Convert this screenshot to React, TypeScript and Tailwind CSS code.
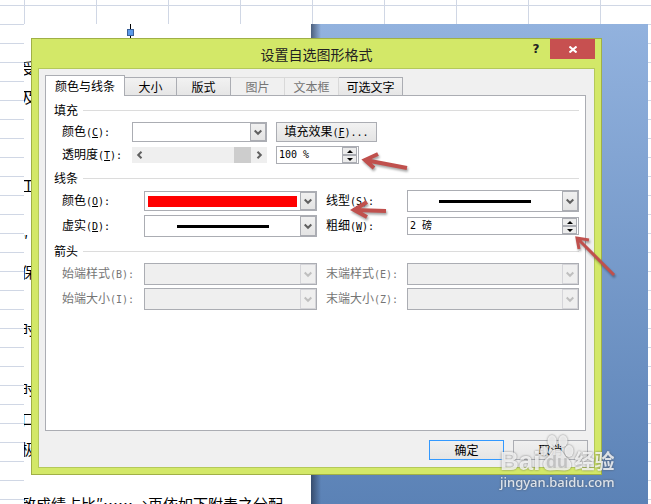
import React from 'react';

const Mono: React.FC<{ children: React.ReactNode }> = ({ children }) => (
  <span className="font-['DejaVu_Sans_Mono','Noto_Sans_CJK_SC',monospace] text-[10px]">{children}</span>
);

interface CaptionProps {
  text: string;
  hotkey: string;
  htmlFor: string;
  disabled?: boolean;
}

const Caption: React.FC<CaptionProps> = ({ text, hotkey, htmlFor, disabled }) => (
  <label htmlFor={htmlFor} className={`whitespace-nowrap ${disabled ? 'text-[#757575]' : ''}`}>
    {text}
    <Mono>
      (<span className={disabled ? '' : 'underline'}>{hotkey}</span>):
    </Mono>
  </label>
);

const Chevron: React.FC<{ d: string }> = ({ d }) => (
  <svg viewBox="0 0 8 8" className="h-2 w-2" fill="none" stroke="currentColor" strokeWidth="2">
    <path d={d} />
  </svg>
);

interface ComboProps {
  id: string;
  disabled?: boolean;
  small?: boolean;
  children?: React.ReactNode;
}

const Combo: React.FC<ComboProps> = ({ id, disabled, small, children }) => (
  <div className={`relative w-full ${small ? 'h-5' : 'h-[22px]'}`}>
    <select
      id={id}
      disabled={disabled}
      className="block h-full w-full appearance-none border border-[#abadb3] bg-white outline-none disabled:bg-[#efefef] disabled:opacity-100"
    />
    <div className="pointer-events-none absolute inset-0 flex p-px">
      <div className="flex flex-1 items-center justify-center">{children}</div>
      <div
        className={`flex w-4 items-center justify-center border ${
          disabled
            ? 'border-[#d5d5d9] bg-[#efefef] text-[#bfbfbf]'
            : 'border-[#abadb3] bg-gradient-to-b from-[#f0f0f0] to-[#e4e4e4] text-[#606060]'
        }`}
      >
        <Chevron d="M.7 2.5 4 5.8 7.3 2.5" />
      </div>
    </div>
  </div>
);

const Spinner: React.FC<{ id: string; value: string }> = ({ id, value }) => (
  <div className="flex h-[18px] w-full border border-[#abadb3] bg-white">
    <input
      id={id}
      defaultValue={value}
      className="min-w-0 flex-1 pl-[2px] font-['DejaVu_Sans_Mono','Noto_Sans_CJK_SC',monospace] text-[10px] outline-none"
    />
    <div className="mr-px flex w-[15px] flex-col">
      {['M3 0 6 3H0Z', 'M0 0H6L3 3Z'].map((d, i) => (
        <button
          key={d}
          type="button"
          aria-label={i ? 'down' : 'up'}
          className="flex flex-1 items-center justify-center border border-[#abadb3] bg-[#ececec]"
        >
          <svg viewBox="0 0 6 3" className="h-[3px] w-[6px]">
            <path d={d} />
          </svg>
        </button>
      ))}
    </div>
  </div>
);

const Section: React.FC<{ title: string; children: React.ReactNode }> = ({ title, children }) => (
  <section>
    <div className="flex h-4 items-center gap-[5px]">
      <h2>{title}</h2>
      <div className="h-px flex-1 bg-[#dcdcdc]" />
    </div>
    {children}
  </section>
);

const tabs = [
  { name: '大小', width: 'w-[52px]' },
  { name: '版式', width: 'w-[54px]' },
  { name: '图片', width: 'w-[54px]', disabled: true },
  { name: '文本框', width: 'w-[54px]', disabled: true },
  { name: '可选文字', width: 'w-[64px]' },
];

// lines of the document that peek out left of the dialog
const docLines = [
  { text: '受', height: 'h-[29px]' },
  { text: '及', height: 'h-[88px]' },
  { text: '工', height: 'h-[56px]' },
  { text: '″', height: 'h-[31px]' },
  { text: '保', height: 'h-[57px]' },
  { text: '时', height: 'h-[60px]' },
  { text: '时', height: 'h-[30px]' },
  { text: '口', height: 'h-[30px]' },
  { text: '极', height: 'h-[55px]' },
  { text: '致成绩占比″……→再依如下附表之分配', height: 'h-[11px]' },
];

const Arrow: React.FC<{ className: string; d: string; width?: number }> = ({ className, d, width = 4 }) => (
  <svg
    viewBox="0 0 50 50"
    className={`pointer-events-none absolute h-[50px] w-[50px] overflow-visible drop-shadow-[1px_2px_1px_rgba(0,0,0,0.35)] ${className}`}
    fill="none"
    stroke="#c0504d"
    strokeWidth={width}
  >
    <path d={d} />
  </svg>
);

const Watermark: React.FC = () => (
  <div className="pointer-events-none absolute top-[434px] left-[500px] text-white/80 drop-shadow-[0_0_1px_rgba(70,70,70,0.8)]">
    <div className="flex h-[40px] items-end">
      <span className="font-['Liberation_Sans',sans-serif] text-[26px] leading-[26px] font-bold">Bai</span>
      <svg viewBox="0 0 34 40" className="h-[40px] w-[34px]" fill="currentColor">
        <ellipse cx="4" cy="17" rx="4" ry="5" />
        <ellipse cx="12" cy="7" rx="4.5" ry="6" />
        <ellipse cx="23" cy="7" rx="4.5" ry="6" />
        <ellipse cx="29" cy="17" rx="4.5" ry="6" />
        <path d="M17 15c-5 0-6 5-9 8-4 3-6 6-4 10 2 5 8 3 13 3s12 2 14-3c1-4-1-7-5-10-3-4-4-8-9-8Z" />
        <text
          x="17"
          y="34"
          textAnchor="middle"
          fill="#999"
          fillOpacity=".45"
          className="font-['Liberation_Sans',sans-serif] text-[18px] font-bold"
        >
          du
        </text>
      </svg>
      <span className="font-['Noto_Sans_CJK_SC',sans-serif] text-[20px] leading-[26px] font-bold">经验</span>
    </div>
    <div className="font-['Noto_Sans',sans-serif] text-[13px] leading-4 font-medium">jingyan.baidu.com</div>
  </div>
);

const App: React.FC = () => {
  return (
    <div className="relative flex h-screen flex-col overflow-hidden bg-white font-['Noto_Sans_CJK_SC',sans-serif] text-[12px] leading-4 text-black">
      {/* sheet grid */}
      <div className="h-6 shrink-0 bg-[linear-gradient(to_right,#d0d7e5_1px,transparent_1px),linear-gradient(to_bottom,#d0d7e5_1px,transparent_1px)] bg-[size:72px_24px,100%_19px] bg-[position:24px_0,0_5px]" />
      <div className="flex min-h-0 flex-1 bg-[linear-gradient(to_bottom,#d0d7e5_1px,transparent_1px)] bg-[size:100%_19px] pr-[3px] pl-6">
        <div className="w-[287px] overflow-hidden bg-white pt-[33px] text-[15px] leading-[22px] whitespace-nowrap">
          {docLines.map((line, i) => (
            <p key={i} className={`-ml-[3px] ${line.height}`}>
              {line.text}
            </p>
          ))}
        </div>
        <div className="flex-1 bg-[linear-gradient(to_right,rgba(30,40,60,0.6),transparent_10px),linear-gradient(to_bottom,#92b2de,#5b82b6)]" />
      </div>

      {/* shape handle */}
      <div className="absolute top-6 left-[130px] h-4 w-px bg-black" />
      <div className="absolute top-[29px] left-[127px] h-[7px] w-[7px] border border-[#3a6098] bg-[#5b9aea]" />

      {/* dialog */}
      <div className="absolute top-[38px] left-[31px] w-[571px] border border-[#a0b046] bg-[#d3e868] px-[6px] pb-[6px]">
        <div className="relative flex h-[29px] items-center justify-center">
          <h1 className="text-[14px] leading-5 text-[#222]">设置自选图形格式</h1>
          <div className="absolute top-0 right-0 flex">
            <button type="button" className="h-5 w-7 font-['DejaVu_Sans',sans-serif] text-[12px] font-bold text-[#222]">
              ?
            </button>
            <button type="button" aria-label="close" className="flex h-5 w-[45px] items-center justify-center bg-[#c75050]">
              <svg viewBox="0 0 8 7" className="h-[7px] w-[8px]" stroke="white" strokeWidth="2">
                <path d="M.5.5l7 6M7.5.5l-7 6" />
              </svg>
            </button>
          </div>
        </div>

        <div className="border border-[#b4c95a] bg-[#f0f0f0] px-[6px] pt-[6px] pb-[7px]">
          <div className="flex h-5 items-end">
            <button
              type="button"
              className="relative z-10 -mb-px h-[21px] w-[80px] border border-b-0 border-[#abadb3] bg-white"
            >
              颜色与线条
            </button>
            {tabs.map((tab) => (
              <button
                key={tab.name}
                type="button"
                disabled={tab.disabled}
                className={`h-[18px] border border-b-0 border-l-0 border-[#abadb3] bg-gradient-to-b from-[#f2f2f2] to-[#e6e6e6] disabled:border-[#d9d9d9] disabled:bg-none disabled:text-[#757575] ${tab.width}`}
              >
                {tab.name}
              </button>
            ))}
          </div>

          <div className="mr-[2px] flex h-[336px] flex-col gap-[6px] border border-[#abadb3] bg-white pt-[6px] pr-[6px] pl-2">
            <Section title="填充">
              <div className="mt-1 grid grid-cols-[70px_135px] items-center gap-y-1 pl-2">
                <Caption text="颜色" hotkey="C" htmlFor="fill-color" />
                <div className="flex gap-[9px]">
                  <div className="w-[135px] shrink-0">
                    <Combo id="fill-color" small />
                  </div>
                  <button
                    type="button"
                    className="h-5 w-[101px] shrink-0 border border-[#abadb3] bg-gradient-to-b from-[#f2f2f2] to-[#e4e4e4] whitespace-nowrap"
                  >
                    填充效果
                    <Mono>
                      (<span className="underline">F</span>)...
                    </Mono>
                  </button>
                </div>
                <Caption text="透明度" hotkey="T" htmlFor="opacity" />
                <div className="flex items-center gap-[9px]">
                  <div className="flex h-4 w-[135px] shrink-0 items-center bg-[#efefef] px-1 text-[#606060]">
                    <Chevron d="M5.5 .7 2.2 4 5.5 7.3" />
                    <div className="mr-1 ml-auto h-4 w-[17px] bg-[#cdcdcd]" />
                    <Chevron d="M2.5 .7 5.8 4 2.5 7.3" />
                  </div>
                  <div className="w-[83px] shrink-0">
                    <Spinner id="opacity" value="100 %" />
                  </div>
                </div>
              </div>
            </Section>

            <Section title="线条">
              <div className="mt-1 grid grid-cols-[82px_173px_90px_1fr] items-center gap-y-[3px] pl-2">
                <Caption text="颜色" hotkey="O" htmlFor="line-color" />
                <Combo id="line-color" small>
                  <div className="mx-[3px] h-[11px] flex-1 bg-[#ff0000]" />
                </Combo>
                <div className="pl-[9px]">
                  <Caption text="线型" hotkey="S" htmlFor="line-style" />
                </div>
                <Combo id="line-style">
                  <div className="h-[3px] w-[92px] bg-black" />
                </Combo>
                <Caption text="虚实" hotkey="D" htmlFor="dash" />
                <Combo id="dash">
                  <div className="h-[3px] w-[92px] bg-black" />
                </Combo>
                <div className="pl-[9px]">
                  <Caption text="粗细" hotkey="W" htmlFor="weight" />
                </div>
                <Spinner id="weight" value="2 磅" />
              </div>
            </Section>

            <Section title="箭头">
              <div className="mt-1 grid grid-cols-[82px_173px_90px_1fr] items-center gap-y-[3px] pl-2">
                <Caption text="始端样式" hotkey="B" htmlFor="begin-style" disabled />
                <Combo id="begin-style" disabled />
                <div className="pl-[9px]">
                  <Caption text="末端样式" hotkey="E" htmlFor="end-style" disabled />
                </div>
                <Combo id="end-style" disabled />
                <Caption text="始端大小" hotkey="I" htmlFor="begin-size" disabled />
                <Combo id="begin-size" disabled />
                <div className="pl-[9px]">
                  <Caption text="末端大小" hotkey="Z" htmlFor="end-size" disabled />
                </div>
                <Combo id="end-size" disabled />
              </div>
            </Section>
          </div>

          <div className="mt-[9px] flex justify-end gap-[9px]">
            <button
              type="submit"
              className="h-5 w-[75px] border border-[#3399ff] bg-gradient-to-b from-[#f0f0f0] to-[#e5e5e5]"
            >
              确定
            </button>
            <button
              type="button"
              className="h-5 w-[75px] border border-[#abadb3] bg-gradient-to-b from-[#f0f0f0] to-[#e5e5e5]"
            >
              取消
            </button>
          </div>
        </div>
      </div>

      <Arrow className="top-[150px] left-[360px]" d="M47 18 5 10M18 4 5 10 14 18" />
      <Arrow className="top-[200px] left-[350px]" d="M36 11 5 10M17 2 4 10 17 17" />
      <Arrow className="top-[235px] left-[574px]" width={3} d="M40 40 3 3M15 5 3 3 5 14" />
      <Watermark />
    </div>
  );
};

export default App;
